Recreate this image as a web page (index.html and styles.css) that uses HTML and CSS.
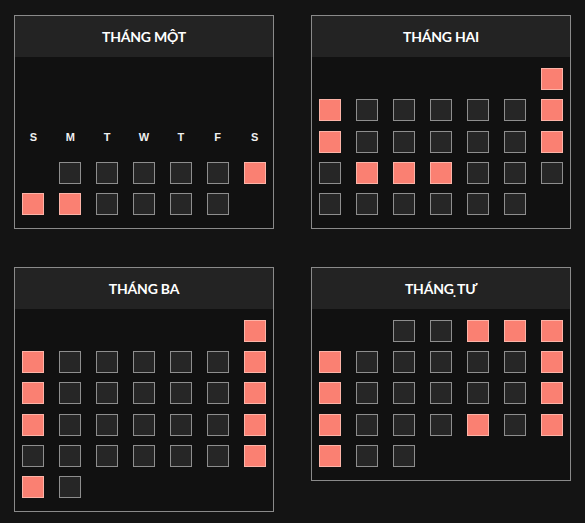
FILE: index.html
```html
<!DOCTYPE html>
<html lang="vi">
<head>
<meta charset="utf-8">
<title>Lịch</title>
<link rel="stylesheet" href="styles.css">
</head>
<body>
<div class="months">
  <section class="card card--stretch">
    <header class="card-head">THÁNG MỘT</header>
    <div class="card-body card-body--end">
      <span class="wd">S</span><span class="wd">M</span><span class="wd">T</span><span class="wd">W</span><span class="wd">T</span><span class="wd">F</span><span class="wd">S</span>
      <span class="blank"></span><span class="day"></span><span class="day"></span><span class="day"></span><span class="day"></span><span class="day"></span><span class="day on"></span>
      <span class="day on"></span><span class="day on"></span><span class="day"></span><span class="day"></span><span class="day"></span><span class="day"></span>
    </div>
  </section>

  <section class="card">
    <header class="card-head">THÁNG HAI</header>
    <div class="card-body">
      <span class="blank"></span><span class="blank"></span><span class="blank"></span><span class="blank"></span><span class="blank"></span><span class="blank"></span><span class="day on"></span>
      <span class="day on"></span><span class="day"></span><span class="day"></span><span class="day"></span><span class="day"></span><span class="day"></span><span class="day on"></span>
      <span class="day on"></span><span class="day"></span><span class="day"></span><span class="day"></span><span class="day"></span><span class="day"></span><span class="day on"></span>
      <span class="day"></span><span class="day on"></span><span class="day on"></span><span class="day on"></span><span class="day"></span><span class="day"></span><span class="day"></span>
      <span class="day"></span><span class="day"></span><span class="day"></span><span class="day"></span><span class="day"></span><span class="day"></span>
    </div>
  </section>

  <section class="card">
    <header class="card-head">THÁNG BA</header>
    <div class="card-body">
      <span class="blank"></span><span class="blank"></span><span class="blank"></span><span class="blank"></span><span class="blank"></span><span class="blank"></span><span class="day on"></span>
      <span class="day on"></span><span class="day"></span><span class="day"></span><span class="day"></span><span class="day"></span><span class="day"></span><span class="day on"></span>
      <span class="day on"></span><span class="day"></span><span class="day"></span><span class="day"></span><span class="day"></span><span class="day"></span><span class="day on"></span>
      <span class="day on"></span><span class="day"></span><span class="day"></span><span class="day"></span><span class="day"></span><span class="day"></span><span class="day on"></span>
      <span class="day"></span><span class="day"></span><span class="day"></span><span class="day"></span><span class="day"></span><span class="day"></span><span class="day on"></span>
      <span class="day on"></span><span class="day"></span>
    </div>
  </section>

  <section class="card">
    <header class="card-head">THÁNG &#x323;TƯ</header>
    <div class="card-body">
      <span class="blank"></span><span class="blank"></span><span class="day"></span><span class="day"></span><span class="day on"></span><span class="day on"></span><span class="day on"></span>
      <span class="day on"></span><span class="day"></span><span class="day"></span><span class="day"></span><span class="day"></span><span class="day"></span><span class="day on"></span>
      <span class="day on"></span><span class="day"></span><span class="day"></span><span class="day"></span><span class="day"></span><span class="day"></span><span class="day on"></span>
      <span class="day on"></span><span class="day"></span><span class="day"></span><span class="day"></span><span class="day on"></span><span class="day"></span><span class="day on"></span>
      <span class="day on"></span><span class="day"></span><span class="day"></span>
    </div>
  </section>
</div>
</body>
</html>
```

FILE: styles.css
```css
html, body {
  margin: 0;
  background: #141414;
}

body {
  padding: 15px 14px;
  font-family: "Liberation Sans", Arial, sans-serif;
}

.months {
  display: grid;
  grid-template-columns: 260px 260px;
  column-gap: 37px;
  row-gap: 37.5px;
  align-items: start;
}

.card {
  border: 1px solid #8a8a8a;
  background: #111111;
  display: flex;
  flex-direction: column;
}

.card--stretch {
  align-self: stretch;
}

.card-head {
  height: 41px;
  background: #232323;
  display: flex;
  align-items: center;
  justify-content: center;
  font-family: Lato, "Open Sans", sans-serif;
  font-weight: 700;
  font-size: 14px;
  color: #ffffff;
  letter-spacing: -0.2px;
}

.card-body {
  flex: 1;
  display: grid;
  grid-template-columns: repeat(7, 1fr);
  grid-auto-rows: 22px;
  row-gap: 9.33px;
  justify-items: center;
  padding: 11px 0 13px;
}

.card-body--end {
  grid-template-rows: 31px;
  align-content: end;
}

.wd {
  align-self: center;
  font-weight: 700;
  font-size: 11px;
  color: #f0f0f0;
}

.day,
.blank {
  width: 22px;
  height: 22px;
  box-sizing: border-box;
}

.day {
  background: #262626;
  border: 1px solid #8e8e8e;
}

.day.on {
  background: #fa8072;
  border-color: #fcb3a7;
}
```
